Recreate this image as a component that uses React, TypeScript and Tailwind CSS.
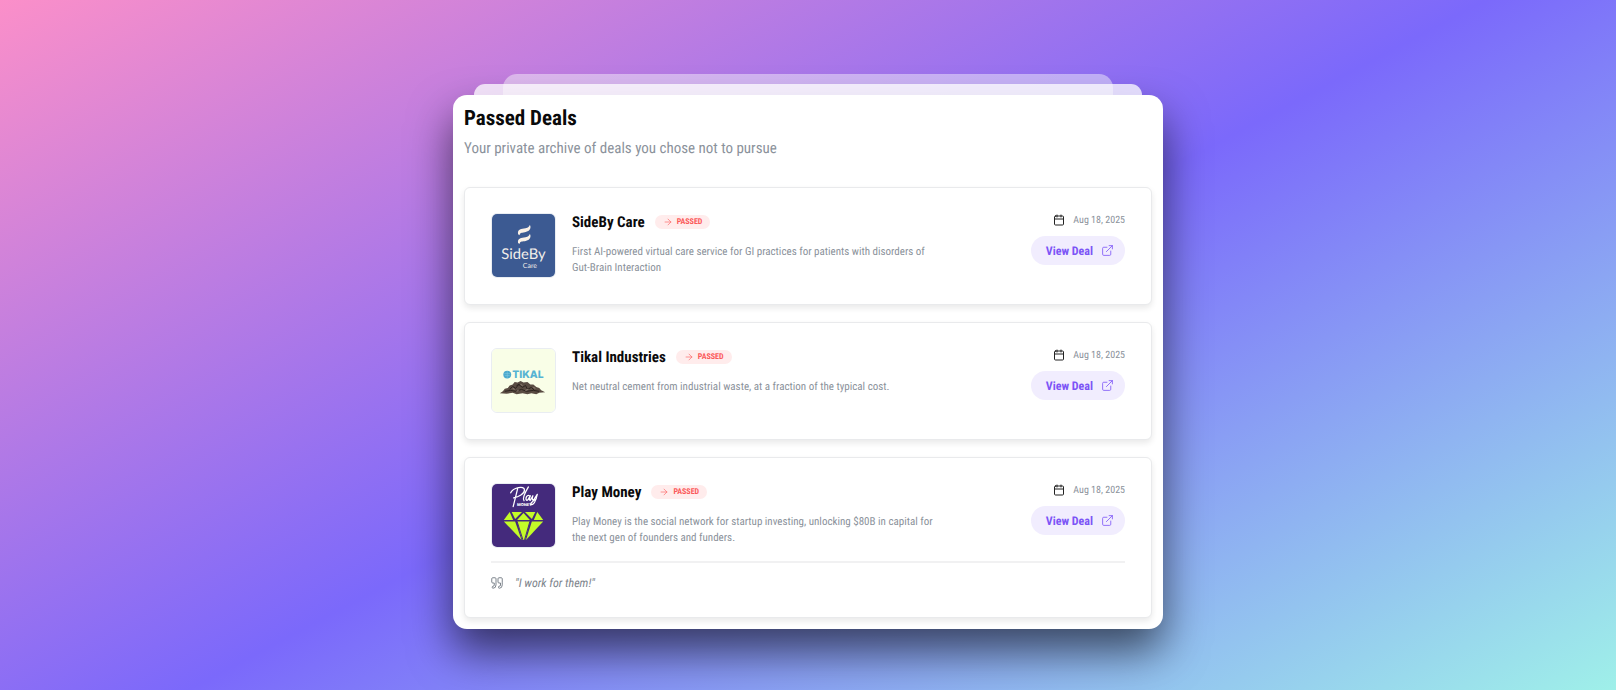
import React from "react";
import { ArrowRight, Calendar, ExternalLink } from "lucide-react";

type Deal = {
  name: string;
  description: string;
  date: string;
  logo: React.ReactNode;
  note?: string;
};

function SideByLogo() {
  return (
    <svg viewBox="0 0 64 64" className="size-full" role="img" aria-label="SideBy Care logo">
      <rect width="64" height="64" fill="#3c5a92" />
      <path d="M26.500 20.500C25.500 15 30 15.500 34 14.500C37 13.800 37.800 12.800 38 11.500L39 12C39.800 17 36 18 32 18.800C29 19.300 28.500 19.500 28 21.500Z" fill="#fbf1e6" />
      <path d="M26.500 29.500C25.500 24 30 24.500 34 23.500C37 22.800 37.800 21.800 38 20.500L39 21C39.800 26 36 27 32 27.800C29 28.300 28.500 28.500 28 30.500Z" fill="#fbf1e6" />
      <text x="32" y="46" textAnchor="middle" fontSize="15" fill="#f1eeea" fontFamily="Lato, sans-serif">SideBy</text>
      <text x="38.500" y="54.500" textAnchor="middle" fontSize="7" fill="#f1eeea" fontFamily="Lato, sans-serif">Care</text>
    </svg>
  );
}

function TikalLogo() {
  return (
    <svg viewBox="0 0 64 64" className="size-full" role="img" aria-label="Tikal logo">
      <rect width="64" height="64" fill="#f9fee7" />
      <circle cx="15.500" cy="26" r="4" fill="#4aa9cf" />
      <path d="M12.500 25h6M13 27h5M15.500 22.500v7" stroke="#8accdf" strokeWidth=".5" />
      <text x="20.500" y="29.500" fontSize="10.500" fontWeight="800" fill="#55b3d3" fontFamily="Inter, sans-serif">TIKAL</text>
      <path d="M8 45L11 43L13 40.500L16 39.500L18 37L21 36L23 33.500L26 34L29 32.500L32 34L36 33.500L39 36L42 36L45 38.500L48 39.500L50 42L54 44L48 44.500L45 46L40 45L36 46L31 45L25 46L21 44.500L15 45.500Z" fill="#594b42" />
      <path d="M18 41l3-3 3 2 3-4 4 3 3-2 2 4 4-2 3 3M13 43l6-1 5 1 6-2 5 2 7-1 6 1M25 37l3-1" stroke="#2c231e" strokeWidth="1" fill="none" />
      <path d="M21 40l2 1M29 36l2 1M34 42l3-1M42 39l2 1M25 43l2-1" stroke="#93847a" strokeWidth="1" />
    </svg>
  );
}

function PlayMoneyLogo() {
  return (
    <svg viewBox="0 0 64 64" className="size-full" role="img" aria-label="Play Money logo">
      <rect width="64" height="64" fill="#442a7c" />
      <g fill="none" stroke="#fff" strokeWidth="1.300" strokeLinecap="round" strokeLinejoin="round">
        <path d="M26 5L21.500 23M19 9C21 4 33 1 33 6C33 10 27 13 22 14M37 3C34 8 31 15 32.500 17M38 12C35 10 33 17 36 16.500C37 16 38 13 39 12C38 14 37.500 17 39 16.500L41.500 12C40 16 41.500 17 43 15L46 10.500C45 15 43 21 40 21C38 21 40 18 45 15" />
      </g>
      <text x="33" y="22.500" textAnchor="middle" fontSize="4" fontWeight="800" fill="#fff" fontFamily="Inter, sans-serif">MONEY</text>
      <g fill="#c3fb28">
        <path d="M18 28.500L12 36.500H21.500Z" />
        <path d="M20 28.500H30.500L23.500 35.500Z" />
        <path d="M32 29.500L25.500 36.500H38.500Z" />
        <path d="M33.500 28.500H44L40.500 35.500Z" />
        <path d="M46 28.500L52 36.500H42.500Z" />
        <path d="M12 38H23.500L30 57Z" />
        <path d="M25.500 38H38.500L33.500 57H30.800Z" />
        <path d="M40.500 38H52L34.500 57Z" />
        <path d="M25.500 38L31.500 57M38.500 38L33 57" stroke="#442a7c" strokeWidth="1" />
      </g>
    </svg>
  );
}

function QuoteMark() {
  return (
    <svg viewBox="0 0 24 24" className="size-3 shrink-0 text-[#7d848c]" fill="none" stroke="currentColor" strokeWidth="2" strokeLinecap="round" strokeLinejoin="round" aria-hidden="true">
      <path d="M10 11V3.500A2 2 0 0 0 8 1.500H3.500A2 2 0 0 0 1.500 3.500V10A2 2 0 0 0 3.500 12H6.500V16A2.500 2.500 0 0 1 4 18.500A1.500 1.500 0 0 0 2.500 20V21A1.500 1.500 0 0 0 4 22.500A6 6 0 0 0 10 16.500Z" />
      <path d="M22.500 11V3.500A2 2 0 0 0 20.500 1.500H16A2 2 0 0 0 14 3.500V10A2 2 0 0 0 16 12H19V16A2.500 2.500 0 0 1 16.500 18.500A1.500 1.500 0 0 0 15 20V21A1.500 1.500 0 0 0 16.500 22.500A6 6 0 0 0 22.500 16.500Z" />
    </svg>
  );
}

const deals: Deal[] = [
  {
    name: "SideBy Care",
    description:
      "First AI-powered virtual care service for GI practices for patients with disorders of Gut-Brain Interaction",
    date: "Aug 18, 2025",
    logo: <SideByLogo />,
  },
  {
    name: "Tikal Industries",
    description: "Net neutral cement from industrial waste, at a fraction of the typical cost.",
    date: "Aug 18, 2025",
    logo: <TikalLogo />,
  },
  {
    name: "Play Money",
    description:
      "Play Money is the social network for startup investing, unlocking $80B in capital for the next gen of founders and funders.",
    date: "Aug 18, 2025",
    logo: <PlayMoneyLogo />,
    note: "\"I work for them!\"",
  },
];

function DealCard({ deal }: { deal: Deal }) {
  return (
    <li className="rounded-md border border-[#e9eaec] bg-white px-[26px] pt-[25px] pb-[26px] shadow-[0_3px_6px_rgba(0,0,0,0.09)]">
      <article>
        <div className="flex items-start gap-4">
          <div className="size-[65px] shrink-0 overflow-hidden rounded-md border border-[#e9edf2]">
            {deal.logo}
          </div>
          <div className="min-w-0 flex-1">
            <div className="flex items-center gap-2.5">
              <h2 className="text-[15px] leading-[18px] font-bold text-[#0a0a0b]">{deal.name}</h2>
              <span className="flex h-[14px] items-center gap-1 rounded-full bg-[#ffecec] px-2 text-[8px] font-bold text-[#fb5a5a]">
                <ArrowRight className="size-[10px]" strokeWidth={1.5} aria-hidden="true" />
                PASSED
              </span>
            </div>
            <p className="mt-[13px] max-w-[368px] text-[11px] leading-4 text-[#8b929b]">{deal.description}</p>
          </div>
          <div className="flex shrink-0 flex-col items-end gap-2.5">
            <div className="mt-px flex h-3 items-center gap-2 text-[10px] text-[#8b929b]">
              <Calendar className="size-3 text-[#222]" strokeWidth={2} aria-hidden="true" />
              <time dateTime="2025-08-18">{deal.date}</time>
            </div>
            <a
              href="#"
              className="flex h-[29px] items-center gap-2 rounded-full bg-[#f1edfe] pr-[11px] pl-[15px] text-[12px] font-bold text-[#7c55f6]"
            >
              View Deal
              <ExternalLink className="size-[13px]" strokeWidth={1.5} aria-hidden="true" />
            </a>
          </div>
        </div>
        {deal.note && (
          <div className="mt-[13px] flex items-center gap-3 border-t-2 border-[#f1f1f2] pt-3">
            <QuoteMark />
            <p className="text-[12px] leading-4 text-[#7d848c] italic">{deal.note}</p>
          </div>
        )}
      </article>
    </li>
  );
}

export default function App() {
  return (
    <main className="flex min-h-screen flex-col items-center bg-[linear-gradient(152deg,#fb8fc9_0%,#7b69fb_51%,#9ff0e9_100%)] pt-[74px] pb-[60px] font-['Roboto_Condensed','Liberation_Sans_Narrow','Roboto',sans-serif] [text-rendering:geometricPrecision]">
      <div className="relative w-full max-w-[710px]">
        <div className="mx-auto h-[21px] w-[86%] rounded-t-[14px] bg-white/45" />
        <div className="absolute inset-x-[21px] top-[10px] h-[11px] rounded-t-[14px] bg-white/75" />
        <section className="rounded-[14px] bg-white px-[11px] pt-3 pb-[11px] shadow-[0_22px_44px_rgba(0,0,0,0.6)]">
          <h1 className="text-[21px] leading-6 font-bold text-[#0a0a0b]">Passed Deals</h1>
          <p className="mt-[7px] text-[15px] leading-5 text-[#8b929b]">
            Your private archive of deals you chose not to pursue
          </p>
          <ul className="mt-[29px] flex flex-col gap-[17px]">
            {deals.map((deal) => (
              <DealCard key={deal.name} deal={deal} />
            ))}
          </ul>
        </section>
      </div>
    </main>
  );
}
